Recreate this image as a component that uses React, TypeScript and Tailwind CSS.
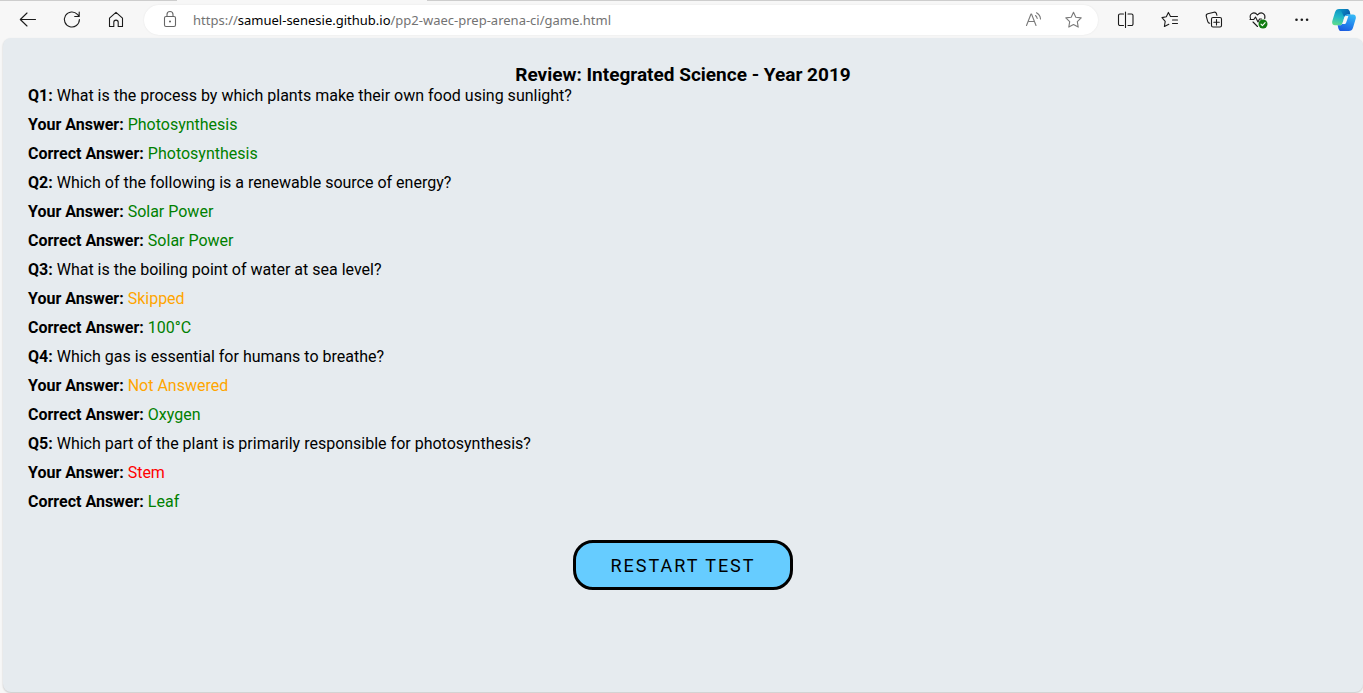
import type { ReactNode } from "react";

type Status = "correct" | "skipped" | "wrong";

interface ReviewItem {
  question: string;
  given: string;
  status: Status;
  answer: string;
}

const items: ReviewItem[] = [
  {
    question: "What is the process by which plants make their own food using sunlight?",
    given: "Photosynthesis",
    status: "correct",
    answer: "Photosynthesis",
  },
  {
    question: "Which of the following is a renewable source of energy?",
    given: "Solar Power",
    status: "correct",
    answer: "Solar Power",
  },
  {
    question: "What is the boiling point of water at sea level?",
    given: "Skipped",
    status: "skipped",
    answer: "100°C",
  },
  {
    question: "Which gas is essential for humans to breathe?",
    given: "Not Answered",
    status: "skipped",
    answer: "Oxygen",
  },
  {
    question: "Which part of the plant is primarily responsible for photosynthesis?",
    given: "Stem",
    status: "wrong",
    answer: "Leaf",
  },
];

const statusColor: Record<Status, string> = {
  correct: "text-[#008000]",
  skipped: "text-[#ffa500]",
  wrong: "text-[#ff0000]",
};

function ToolButton({ label, children }: { label: string; children: ReactNode }) {
  return (
    <button type="button" aria-label={label} className="flex h-8 w-11 shrink-0 items-center justify-center">
      {children}
    </button>
  );
}

function Icon({ children, color = "#1b1b1b" }: { children: ReactNode; color?: string }) {
  return (
    <svg
      width="20"
      height="20"
      viewBox="0 0 20 20"
      fill="none"
      stroke={color}
      strokeWidth="1.1"
      strokeLinecap="round"
      strokeLinejoin="round"
      aria-hidden="true"
    >
      {children}
    </svg>
  );
}

function CopilotLogo() {
  return (
    <svg width="24" height="24" viewBox="0 0 24 24" aria-hidden="true">
      <defs>
        <linearGradient id="cpLeft" x1="0.5" y1="0" x2="0.3" y2="1">
          <stop offset="0" stopColor="#0a8fc4" />
          <stop offset="0.5" stopColor="#22b8c8" />
          <stop offset="1" stopColor="#5fdc8c" />
        </linearGradient>
        <linearGradient id="cpRight" x1="0.7" y1="0" x2="0.3" y2="1">
          <stop offset="0" stopColor="#35b8f5" />
          <stop offset="0.5" stopColor="#2488ee" />
          <stop offset="1" stopColor="#1b5be0" />
        </linearGradient>
        <linearGradient id="cpTop" x1="0" y1="0" x2="1" y2="0.4">
          <stop offset="0" stopColor="#0a9cc8" />
          <stop offset="1" stopColor="#0a5cae" />
        </linearGradient>
      </defs>
      <path d="M7.200 1h7.600c1.600 0 2.300 1 2.800 2.600l.8 2.900h-2.800c-1.600 0-2.500.8-3 2.400L10.600 15c-.5 1.500-1.300 2.300-2.800 2.300H3C.7 17.300-.3 15.400.3 13L3 4.300C3.700 2.200 5 1 7.200 1z" fill="url(#cpLeft)" />
      <path d="M6.500 1h8.300c1.600 0 2.300 1 2.800 2.600l.8 2.900h-2.800c-1.600 0-2.500.8-3 2.400C10.500 7.500 10 2 6.500 1z" fill="url(#cpTop)" />
      <path d="M16.800 23H9.200c-1.600 0-2.300-1-2.800-2.600l-.8-3.100h2.200c1.500 0 2.300-.8 2.800-2.300l2-6.100c.5-1.600 1.400-2.400 3-2.400H21c2.300 0 3.300 1.900 2.700 4.300L21 19.700c-.7 2.100-2 3.300-4.200 3.300z" fill="url(#cpRight)" />
      <path d="M12.300 9.200c.3-.8.8-1.200 1.600-1.200h2.500l-2.200 6.400c-.4 1.100-1 1.600-2.100 1.600H9.900c.4-.4.600-.8.800-1.400z" fill="#f7f7f7" />
    </svg>
  );
}

function BrowserBar() {
  return (
    <header className="flex h-[38px] shrink-0 flex-col bg-[#f7f7f7]">
      <div className="flex h-px shrink-0">
        <span className="w-[177px] bg-[#cdcdcd]" />
        <span className="w-[250px]" />
        <span className="grow bg-[#cdcdcd]" />
      </div>
      <nav aria-label="Browser" className="flex h-[37px] items-center pb-px pl-[6px] pt-[2px]">
        <ToolButton label="Back">
          <Icon>
            <path d="M17.500 9.500H2.500M9 3 2.300 9.500 9 16" />
          </Icon>
        </ToolButton>
        <ToolButton label="Refresh">
          <Icon>
            <path d="M17.400 9.500A7.500 7.500 0 1 1 15.400 4.400L17 6M17.200 2v4.500h-4.500" />
          </Icon>
        </ToolButton>
        <ToolButton label="Home">
          <Icon>
            <path d="M3.500 8.200 10 2.300l6.500 5.900v8.300h-4.300v-4.200a2.200 2.200 0 0 0-4.400 0v4.200H3.500z" />
          </Icon>
        </ToolButton>
        <div className="ml-[6px] mr-[6px] flex h-[30px] min-w-0 grow items-center rounded-full bg-white pl-4 pr-1 shadow-[0_0_2px_rgba(0,0,0,0.08)]">
          <Icon color="#666666">
            <rect x="4.500" y="6.500" width="11" height="10" rx="1.500" />
            <path d="M7 6.500V4.500a3 3 0 0 1 6 0v2" />
            <circle cx="10" cy="11.500" r="0.500" fill="#666666" />
          </Icon>
          <a
            href="https://samuel-senesie.github.io/pp2-waec-prep-arena-ci/game.html"
            className="ml-[13px] grow truncate font-['Noto_Sans',sans-serif] text-[13px] leading-5 text-[#737373]"
          >
            https://<span className="text-black">samuel-senesie.github.io</span>/pp2-waec-prep-arena-ci/game.html
          </a>
          <button type="button" aria-label="Read aloud" className="flex h-7 w-10 shrink-0 items-center justify-center">
            <Icon color="#7a7a7a">
              <path d="M2.500 15.500 7 4h.5L12 15.500M4 11.500h6.500M11.500 5.500c1 .8 1.500 1.700 1.700 3M12.500 2.800c2.200 1.300 3.800 3.200 4 6.200" />
            </Icon>
          </button>
          <button type="button" aria-label="Add to favorites" className="flex h-7 w-10 shrink-0 items-center justify-center">
            <Icon color="#7a7a7a">
              <path d="m9.500 2.300 2.300 4.900 5.400.7-3.900 3.800.9 5.400-4.700-2.500-4.700 2.500.9-5.400L1.800 7.900l5.400-.7z" />
            </Icon>
          </button>
        </div>
        <ToolButton label="Split screen">
          <Icon>
            <path d="M9.500 2v15.500M7.500 4H4a1.500 1.500 0 0 0-1.500 1.500v8.500A1.500 1.500 0 0 0 4 15.500h3.500M12 4h3.500A1.500 1.500 0 0 1 17 5.500v8.500a1.500 1.500 0 0 1-1.500 1.500H12" />
          </Icon>
        </ToolButton>
        <ToolButton label="Favorites">
          <Icon>
            <path d="M10.500 6.500 8.400 2.400 6.300 6.800l-4.300.8 3.200 3.700-.8 5.200 4.400-2.300M10.500 6.500H17.500M12.500 10H17.500M12.500 13.500H17.500" />
          </Icon>
        </ToolButton>
        <ToolButton label="Collections">
          <Icon>
            <rect x="7.500" y="7.500" width="10" height="9.500" rx="1.500" />
            <path d="M12.500 9.500v5.500M9.800 12.300h5.500M5.700 13.300c-1.200-.2-1.700-.8-2-2L2.300 6.300C2 5 2.600 4.100 3.800 3.800l6.200-1.600c1.200-.3 2 .1 2.400 1.300l.5 1.800" />
          </Icon>
        </ToolButton>
        <ToolButton label="Browser essentials">
          <Icon>
            <path d="M2.500 8.500C1.800 6.500 2.300 4.600 3.800 3.600 5.600 2.400 7.800 2.900 9.500 5c1.700-2.100 4-2.600 5.800-1.400 1.400 1 2 2.800 1.400 4.900M2 9.500h3.800L7.500 7l2.500 5 1.500-3h2M5 12l4.500 4.500" />
            <circle cx="15" cy="14" r="4.500" fill="#107c10" stroke="none" />
            <path d="m13 14.200 1.400 1.400 2.700-2.900" stroke="#ffffff" />
          </Icon>
        </ToolButton>
        <ToolButton label="Settings and more">
          <Icon>
            <g fill="#1b1b1b" stroke="none">
              <circle cx="4.500" cy="9.700" r="1.300" />
              <circle cx="9.800" cy="9.700" r="1.300" />
              <circle cx="15.100" cy="9.700" r="1.300" />
            </g>
          </Icon>
        </ToolButton>
        <button type="button" aria-label="Copilot" className="flex h-8 w-[39px] shrink-0 items-center justify-center">
          <CopilotLogo />
        </button>
      </nav>
    </header>
  );
}

function Review() {
  return (
    <main className="ml-[3px] mb-px flex grow flex-col rounded-lg bg-[#e6ebef] px-[25px] pb-6 pt-[25px] font-[Roboto,sans-serif] text-base text-black shadow-[0_1px_2px_rgba(0,0,0,0.2)]">
      <h1 className="text-center text-[19px] font-bold leading-[23px]">Review: Integrated Science - Year 2019</h1>
      <div className="flex flex-col">
        {items.map((item, index) => (
          <section key={item.question} className="flex flex-col gap-[10px] pb-[10px] leading-[19px]">
            <p>
              <strong>Q{index + 1}:</strong> {item.question}
            </p>
            <p>
              <strong>Your Answer:</strong> <span className={statusColor[item.status]}>{item.given}</span>
            </p>
            <p>
              <strong>Correct Answer:</strong> <span className="text-[#008000]">{item.answer}</span>
            </p>
          </section>
        ))}
      </div>
      <button
        type="button"
        className="mt-[19px] h-[50px] w-[220px] self-center rounded-[20px] border-[3px] border-black bg-[#66ccff] text-[18px] tracking-[2px]"
      >
        RESTART TEST
      </button>
    </main>
  );
}

export default function App() {
  return (
    <div className="flex min-h-screen flex-col bg-[#f7f7f7]">
      <BrowserBar />
      <Review />
    </div>
  );
}
